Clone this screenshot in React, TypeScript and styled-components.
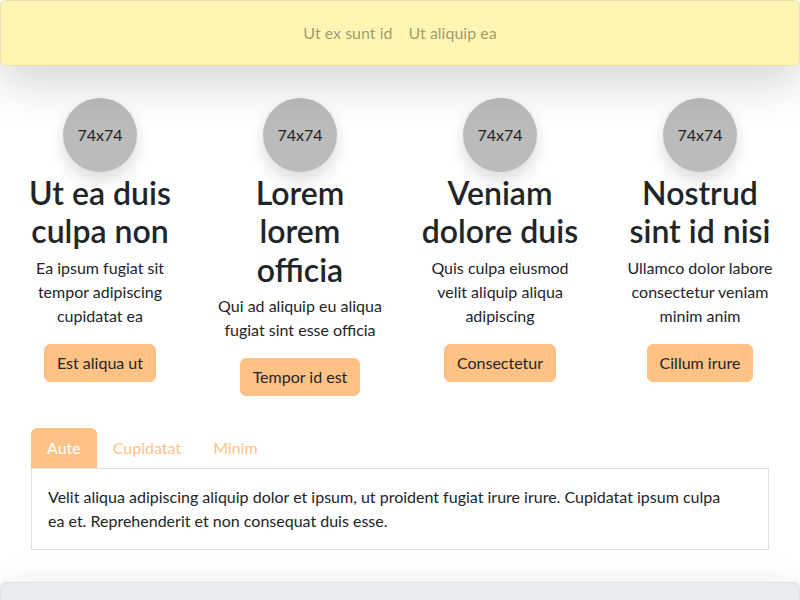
import React, { useState } from "react";
import styled, { createGlobalStyle } from "styled-components";

const GlobalStyle = createGlobalStyle`
  html, body { margin: 0; padding: 0; background: #fff; }
  body {
    font-family: Lato, "Noto Sans", sans-serif;
    font-size: 16px;
    line-height: 1.5;
    color: #212529;
  }
  * { box-sizing: border-box; }
`;

const Page = styled.div`
  display: flex;
  flex-direction: column;
  min-height: 600px;
`;

const Header = styled.header`
  position: relative;
  z-index: 1;
  display: flex;
  justify-content: center;
  align-items: center;
  height: 66px;
  background: #fff5b3;
  border: 1px solid #e6e0b0;
  border-radius: 6px;
  box-shadow: 0 1rem 3rem rgba(0, 0, 0, 0.175);
`;

const NavLink = styled.a`
  padding: 0 8px;
  color: rgba(0, 0, 0, 0.4);
  text-decoration: none;
  line-height: 24px;
`;

const Features = styled.section`
  display: grid;
  grid-template-columns: repeat(4, 1fr);
  align-items: start;
  padding: 32px 0;
`;

const Feature = styled.div`
  display: flex;
  flex-direction: column;
  align-items: center;
  text-align: center;
  padding: 0 12px;
`;

const Avatar = styled.div`
  width: 74px;
  height: 74px;
  border-radius: 50%;
  background: #bbbbbb;
  color: #222;
  display: flex;
  align-items: center;
  justify-content: center;
  font-size: 16px;
  box-shadow: 0 0.5rem 1rem rgba(0, 0, 0, 0.15);
`;

const Title = styled.h2`
  margin: 2px 0 5px;
  font-size: 32px;
  line-height: 38.4px;
  font-weight: 600;
  color: #212529;
`;

const Text = styled.p`
  margin: 0 0 16px;
  font-size: 16px;
  line-height: 24px;
`;

const Line = styled.span`
  display: block;
  white-space: nowrap;
`;

const Button = styled.button`
  font-family: inherit;
  font-size: 16px;
  line-height: 24px;
  padding: 6px 12px;
  border: 1px solid #ffc285;
  border-radius: 6px;
  background: #ffc285;
  color: #212529;
  cursor: pointer;
`;

const TabsWrap = styled.section`
  padding: 0 31px;
`;

const TabList = styled.div`
  display: flex;
`;

const Tab = styled.button<{ $active: boolean }>`
  font-family: inherit;
  font-size: 16px;
  line-height: 24px;
  padding: 8px 16px;
  border: none;
  border-radius: 6px 6px 0 0;
  background: ${(p) => (p.$active ? "#ffc285" : "transparent")};
  color: ${(p) => (p.$active ? "#fff" : "#ffc285")};
  cursor: pointer;
`;

const TabPanel = styled.div`
  border: 1px solid #dee2e6;
  padding: 16px;
  font-size: 16px;
  line-height: 24px;
`;

const Footer = styled.footer`
  margin-top: 32px;
  height: 40px;
  background: #e9ecef;
  border: 1px solid #dee2e6;
  border-radius: 6px;
  box-shadow: 0 0 2rem rgba(0, 0, 0, 0.08);
`;

const features = [
  {
    title: ["Ut ea duis", "culpa non"],
    text: ["Ea ipsum fugiat sit", "tempor adipiscing", "cupidatat ea"],
    button: "Est aliqua ut",
  },
  {
    title: ["Lorem", "lorem", "officia"],
    text: ["Qui ad aliquip eu aliqua", "fugiat sint esse officia"],
    button: "Tempor id est",
  },
  {
    title: ["Veniam", "dolore duis"],
    text: ["Quis culpa eiusmod", "velit aliquip aliqua", "adipiscing"],
    button: "Consectetur",
  },
  {
    title: ["Nostrud", "sint id nisi"],
    text: ["Ullamco dolor labore", "consectetur veniam", "minim anim"],
    button: "Cillum irure",
  },
];

const tabs = ["Aute", "Cupidatat", "Minim"];

const panelLines = [
  "Velit aliqua adipiscing aliquip dolor et ipsum, ut proident fugiat irure irure. Cupidatat ipsum culpa",
  "ea et. Reprehenderit et non consequat duis esse.",
];

export default function App() {
  const [active, setActive] = useState(0);
  return (
    <Page>
      <GlobalStyle />
      <Header>
        <NavLink href="#">Ut ex sunt id</NavLink>
        <NavLink href="#">Ut aliquip ea</NavLink>
      </Header>
      <Features>
        {features.map((f) => (
          <Feature key={f.button}>
            <Avatar>74x74</Avatar>
            <Title>
              {f.title.map((l) => (
                <Line key={l}>{l}</Line>
              ))}
            </Title>
            <Text>
              {f.text.map((l) => (
                <Line key={l}>{l}</Line>
              ))}
            </Text>
            <Button>{f.button}</Button>
          </Feature>
        ))}
      </Features>
      <TabsWrap>
        <TabList>
          {tabs.map((t, i) => (
            <Tab key={t} $active={i === active} onClick={() => setActive(i)}>
              {t}
            </Tab>
          ))}
        </TabList>
        <TabPanel>
          {panelLines.map((l) => (
            <Line key={l}>{l}</Line>
          ))}
        </TabPanel>
      </TabsWrap>
      <Footer />
    </Page>
  );
}
